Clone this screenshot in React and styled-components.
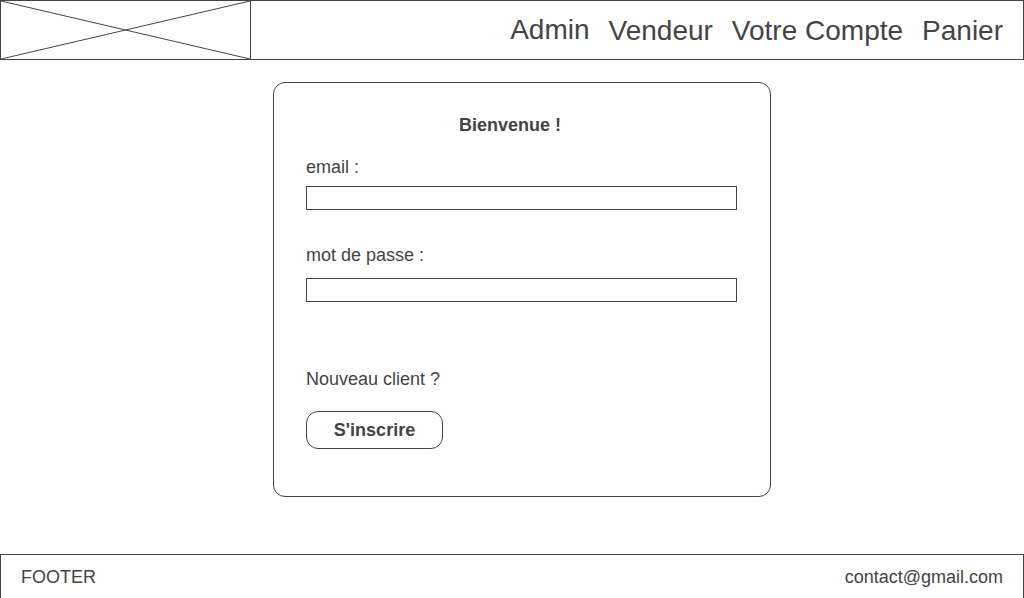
import React from 'react';
import styled, { createGlobalStyle } from 'styled-components';

const GlobalStyle = createGlobalStyle`
    html, body {
        margin: 0;
        padding: 0;
        background: #ffffff;
        overflow: hidden;
    }
    body {
        font-family: "Liberation Sans", Arial, sans-serif;
        color: #444444;
    }
    * {
        box-sizing: border-box;
    }
`;

const Page = styled.div`
    width: 1024px;
    height: 598px;
    display: flex;
    flex-direction: column;
`;

const Header = styled.header`
    height: 60px;
    border: 1px solid #444;
    display: flex;
    align-items: center;
    justify-content: space-between;
`;

const Logo = styled.div`
    width: 250px;
    height: 100%;
    border-right: 1px solid #444;
    svg {
        display: block;
        width: 100%;
        height: 100%;
    }
`;

const Nav = styled.nav`
    display: flex;
    align-items: center;
    gap: 19px;
    padding: 2px 20px 0 0;
`;

const NavLink = styled.a`
    font-size: 28px;
    line-height: 32px;
    color: #444;
    text-decoration: none;
    margin-bottom: ${(p) => (p.$raised ? '3px' : '0')};
    cursor: pointer;
`;

const Main = styled.main`
    flex: 1;
`;

const Card = styled.form`
    width: 498px;
    margin: 22px 0 0 273px;
    padding: 32px 33px 47px 32px;
    border: 1px solid #444;
    border-radius: 12px;
    display: flex;
    flex-direction: column;
    align-items: flex-start;
`;

const Title = styled.h1`
    align-self: stretch;
    margin: 0;
    padding-right: 23px;
    font-size: 18px;
    line-height: 21px;
    font-weight: 700;
    text-align: center;
`;

const Label = styled.label`
    font-size: 18px;
    line-height: 21px;
    margin-top: ${(p) => p.$top}px;
`;

const Input = styled.input`
    align-self: stretch;
    height: 24px;
    margin: ${(p) => p.$top}px 0 0;
    border: 1px solid #444;
    border-radius: 0;
    padding: 0 4px;
    font: inherit;
    outline: none;
    background: #fff;
`;

const Text = styled.p`
    margin: 67px 0 0;
    font-size: 18px;
    line-height: 21px;
`;

const Button = styled.button`
    margin-top: 21px;
    width: 137px;
    height: 38px;
    border: 1px solid #444;
    border-radius: 12px;
    background: #fff;
    color: #444;
    font-family: "Liberation Sans", Arial, sans-serif;
    font-size: 18px;
    font-weight: 700;
    cursor: pointer;
`;

const Footer = styled.footer`
    height: 44px;
    border: 1px solid #444;
    border-bottom: none;
    display: flex;
    align-items: center;
    justify-content: space-between;
    padding: 2px 20px 0 20px;
    font-size: 18px;
`;

const App = () => {
    return (
        <>
            <GlobalStyle />
            <Page>
                <Header>
                    <Logo>
                        <svg viewBox="0 0 250 58" preserveAspectRatio="none">
                            <line x1="0" y1="0" x2="250" y2="58" stroke="#444" strokeWidth="1" />
                            <line x1="0" y1="58" x2="250" y2="0" stroke="#444" strokeWidth="1" />
                        </svg>
                    </Logo>
                    <Nav>
                        <NavLink $raised>Admin</NavLink>
                        <NavLink>Vendeur</NavLink>
                        <NavLink>Votre Compte</NavLink>
                        <NavLink>Panier</NavLink>
                    </Nav>
                </Header>
                <Main>
                    <Card onSubmit={(e) => e.preventDefault()}>
                        <Title>Bienvenue !</Title>
                        <Label htmlFor="email" $top={21}>email :</Label>
                        <Input id="email" type="email" $top={8} />
                        <Label htmlFor="password" $top={35}>mot de passe :</Label>
                        <Input id="password" type="password" $top={12} />
                        <Text>Nouveau client ?</Text>
                        <Button type="button">S'inscrire</Button>
                    </Card>
                </Main>
                <Footer>
                    <span>FOOTER</span>
                    <span>contact@gmail.com</span>
                </Footer>
            </Page>
        </>
    );
};

export default App;
